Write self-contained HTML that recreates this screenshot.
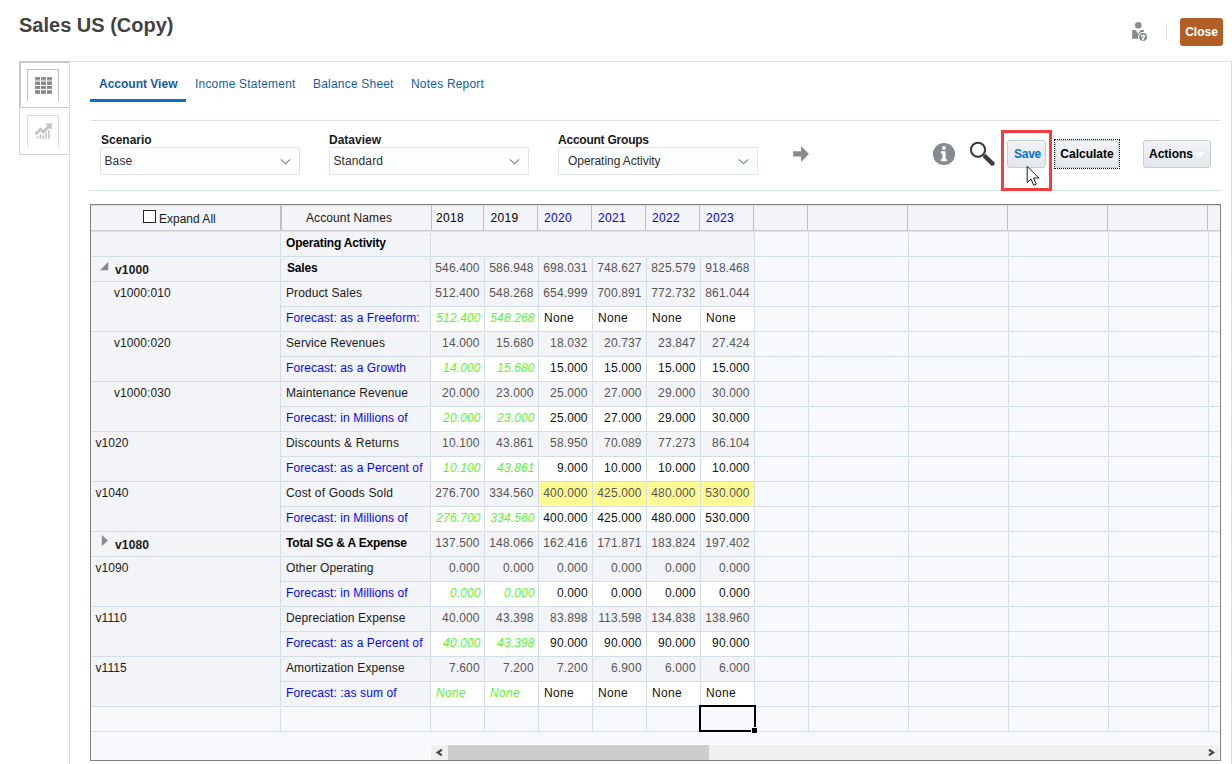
<!DOCTYPE html>
<html lang="en">
<head>
<meta charset="utf-8">
<title>Sales US (Copy)</title>
<style>
html,body{margin:0;padding:0;background:#fff;}
body{width:1232px;height:764px;position:relative;overflow:hidden;font-family:"Liberation Sans",Arial,sans-serif;font-size:12px;color:#1a1a1a;}
#root div,#root svg,#root span.a{position:absolute;}
#root .t{white-space:nowrap;line-height:24px;height:24px;font-size:12px;color:#1a1a1a;}
#root .hatch{background:repeating-linear-gradient(135deg,#fff888 0,#fff888 1.3px,#fffdf0 2.1px,#fffdf0 2.4px,#fff888 2.8284px);}
#root .btn{box-sizing:border-box;border:1px solid #c4ced7;border-radius:3px;background:linear-gradient(#f1f3f5,#e3e7eb);font-weight:bold;font-size:12px;line-height:26px;text-align:center;white-space:nowrap;}
#root .sel{box-sizing:border-box;border:1px solid #dfe4e7;background:#fcfdfe;border-radius:1px;}
</style>
</head>
<body>
<div id="root">
<!-- title -->
<div class="t" style="left:19px;top:10px;font-size:20px;font-weight:bold;line-height:30px;height:30px;color:#424242;">Sales US (Copy)</div>

<!-- person help icon -->
<svg style="left:1130px;top:20px;will-change:transform" width="20" height="23" viewBox="0 0 20 23">
  <circle cx="8.3" cy="5.3" r="3.25" fill="#868b90"/>
  <path d="M2.1 18.8V10.7Q2.1 9.9 2.9 9.9H5.6L8.4 13.7L10.4 9.9H13.1Q13.9 9.9 13.9 10.7V18.8Z" fill="#868b90"/>
  <circle cx="13.1" cy="17" r="5" fill="#fff"/>
  <circle cx="13.1" cy="17" r="3.9" fill="#868b90"/>
  <text x="13.1" y="19.9" font-size="8" font-weight="bold" text-anchor="middle" fill="#fff" stroke="#fff" stroke-width="0.35" font-family="Liberation Sans, Arial, sans-serif">?</text>
</svg>
<div style="left:1166px;top:23px;width:1px;height:17px;background:#d6dfe6;"></div>
<div style="left:1180px;top:18px;width:43px;height:28px;background:#b15f25;border-radius:3px;color:#fff;font-weight:bold;font-size:12px;line-height:28px;text-align:center;">Close</div>

<!-- side tabs -->
<div style="left:19px;top:61px;width:51px;height:94px;box-sizing:border-box;border:1px solid #cfd2d4;background:#fff;"></div>
<div style="left:19px;top:61px;width:51px;height:47px;box-sizing:border-box;border-top:2px solid #c9c9c9;border-left:2px solid #c9c9c9;border-bottom:1px solid #c9c9c9;"></div>
<div style="left:27px;top:69px;width:32px;height:32px;box-sizing:border-box;border:1px solid #bfc3c6;border-bottom:none;"></div>
<svg style="left:35px;top:77px" width="18" height="18" viewBox="0 0 18 18">
  <g fill="#c6c8ca"><rect x="0" y="2.8" width="5" height="2.2"/><rect x="6" y="2.8" width="5" height="2.2"/><rect x="12" y="2.8" width="5" height="2.2"/></g>
  <g fill="#85888b"><rect x="0" y="0.1" width="5" height="2.7"/><rect x="6" y="0.1" width="5" height="2.7"/><rect x="12" y="0.1" width="5" height="2.7"/><rect x="0" y="5" width="5" height="2.9"/><rect x="6" y="5" width="5" height="2.9"/><rect x="12" y="5" width="5" height="2.9"/><rect x="0" y="9" width="5" height="2.9"/><rect x="6" y="9" width="5" height="2.9"/><rect x="12" y="9" width="5" height="2.9"/><rect x="0" y="13.2" width="5" height="3.6"/><rect x="6" y="13.2" width="5" height="3.6"/><rect x="12" y="13.2" width="5" height="3.6"/></g>
</svg>
<div style="left:27px;top:115px;width:32px;height:32px;box-sizing:border-box;border:1px solid #dcdfe1;border-bottom:none;"></div>
<svg style="left:34px;top:122px" width="19" height="18" viewBox="0 0 19 18">
  <g fill="#c3c5c7">
  <path d="M0.3 11.5L6.5 5.2L9.3 8L13.3 4L11 1.7L18 1.1L17.5 8.2L15.3 6L9.3 12L6.5 9.2L2.3 13.5Z"/>
  <rect x="2.8" y="14.4" width="1.5" height="2.4"/><rect x="5.6" y="12.2" width="1.6" height="4.6"/><rect x="8.3" y="13.2" width="1.6" height="3.6"/><rect x="11.1" y="10.8" width="1.6" height="6"/><rect x="14" y="8" width="1.7" height="8.8"/>
  </g>
</svg>

<!-- main panel -->
<div style="left:69px;top:61px;width:1163px;height:720px;box-sizing:border-box;border:1px solid #d6dfe6;background:#fff;"></div>

<!-- tabs -->
<div class="t" style="left:99px;top:72px;font-weight:bold;color:#145c9e;">Account View</div>
<div class="t" style="left:195px;top:72px;color:#145c9e;letter-spacing:0.2px;">Income Statement</div>
<div class="t" style="left:313px;top:72px;color:#145c9e;letter-spacing:0.2px;">Balance Sheet</div>
<div class="t" style="left:411px;top:72px;color:#145c9e;letter-spacing:0.2px;">Notes Report</div>
<div style="left:90px;top:99px;width:96px;height:3px;background:#0572ce;"></div>
<div style="left:90px;top:120px;width:1131px;height:1px;background:#d9e0e6;"></div>

<!-- filters -->
<div class="t" style="left:101px;top:128px;font-weight:bold;">Scenario</div>
<div class="sel" style="left:100px;top:147px;width:200px;height:28px;"></div>
<div class="t" style="left:104.5px;top:149px;color:#2e2e2e;letter-spacing:0.1px;">Base</div>
<svg style="left:279px;top:157px" width="13" height="9" viewBox="0 0 13 9"><path d="M1.8 2.3L6.5 6.8L11.2 2.3" fill="none" stroke="#7a7f85" stroke-width="1.05"/></svg>

<div class="t" style="left:329px;top:128px;font-weight:bold;">Dataview</div>
<div class="sel" style="left:329px;top:147px;width:200px;height:28px;"></div>
<div class="t" style="left:333.5px;top:149px;color:#2e2e2e;letter-spacing:0.1px;">Standard</div>
<svg style="left:508px;top:157px" width="13" height="9" viewBox="0 0 13 9"><path d="M1.8 2.3L6.5 6.8L11.2 2.3" fill="none" stroke="#7a7f85" stroke-width="1.05"/></svg>

<div class="t" style="left:558px;top:128px;font-weight:bold;letter-spacing:-0.23px;">Account Groups</div>
<div class="sel" style="left:558px;top:147px;width:200px;height:28px;"></div>
<div class="t" style="left:568px;top:149px;color:#2e2e2e;letter-spacing:-0.05px;">Operating Activity</div>
<svg style="left:737px;top:157px" width="13" height="9" viewBox="0 0 13 9"><path d="M1.8 2.3L6.5 6.8L11.2 2.3" fill="none" stroke="#7a7f85" stroke-width="1.05"/></svg>

<!-- arrow -->
<svg style="left:793px;top:146px" width="17" height="17" viewBox="0 0 17 17"><path d="M0.2 5.2H8.1V0L15.9 7.95L8.1 16V10.6H0.2Z" fill="#868b8f"/></svg>

<!-- info -->
<svg style="left:932px;top:142px" width="24" height="24" viewBox="0 0 24 24">
  <circle cx="12" cy="12" r="11.1" fill="#868b8f"/>
  <circle cx="11.9" cy="6" r="1.9" fill="#fff"/>
  <path d="M8.8 9.3H13.6V17.2H15.2V19.3H8.8V17.2H10.4V11.4H8.8Z" fill="#fff"/>
</svg>
<!-- search -->
<svg style="left:968px;top:140px" width="28" height="28" viewBox="0 0 28 28">
  <circle cx="10" cy="9.85" r="7.05" fill="none" stroke="#3d3d3d" stroke-width="2.1"/>
  <path d="M16 15.4L25 24.1" stroke="#3d3d3d" stroke-width="4.3" stroke-linecap="butt"/><circle cx="24.6" cy="23.7" r="2.1" fill="#3d3d3d"/>
</svg>

<!-- save highlight + buttons -->
<div style="left:1001px;top:130px;width:51px;height:61px;box-sizing:border-box;border:3px solid #f83d40;z-index:2;"></div>
<div class="btn" style="left:1007px;top:140px;width:39px;height:28px;color:#0572ce;letter-spacing:-0.25px;padding-left:2px;">Save</div>
<div style="left:1054px;top:139px;width:66px;height:30px;box-sizing:border-box;border:1px dotted #000;"></div>
<div class="btn" style="left:1055px;top:140px;width:64px;height:28px;color:#000;line-height:26px;">Calculate</div>
<div class="btn" style="left:1143px;top:140px;width:68px;height:28px;color:#000;text-align:left;padding-left:5px;">Actions</div>
<svg style="left:1195px;top:152px" width="11" height="6" viewBox="0 0 11 6"><path d="M0 0H10L5 5.6Z" fill="#fdfdfe"/></svg>

<div style="left:90px;top:190px;width:1131px;height:1px;background:#d9e0e6;"></div>

<!-- table -->
<div style="left:90px;top:204px;width:1131px;height:557px;background:#f8f9fc;border:1px solid #808080;box-sizing:border-box;"></div>
<div style="left:91px;top:205px;width:1129px;height:25px;background:#f3f4f8;"></div>
<div style="left:91px;top:230px;width:1129px;height:1px;background:#cbcbcb;"></div>
<div style="left:91px;top:205px;width:1129px;height:1px;background:#dcdcdd;"></div>
<div style="left:91px;top:231px;width:1129px;height:1px;background:#dce4eb;"></div>
<div style="left:280px;top:206px;width:2px;height:24px;background:#c0c0c0;"></div>
<div style="left:431px;top:206px;width:1px;height:24px;background:#bdbdbd;"></div>
<div style="left:483px;top:206px;width:1px;height:24px;background:#bdbdbd;"></div>
<div style="left:537px;top:206px;width:1px;height:24px;background:#bdbdbd;"></div>
<div style="left:591px;top:206px;width:1px;height:24px;background:#bdbdbd;"></div>
<div style="left:645px;top:206px;width:1px;height:24px;background:#bdbdbd;"></div>
<div style="left:699px;top:206px;width:1px;height:24px;background:#bdbdbd;"></div>
<div style="left:753px;top:206px;width:1px;height:24px;background:#bdbdbd;"></div>
<div style="left:807px;top:206px;width:1px;height:24px;background:#bdbdbd;"></div>
<div style="left:907px;top:206px;width:1px;height:24px;background:#bdbdbd;"></div>
<div style="left:1007px;top:206px;width:1px;height:24px;background:#bdbdbd;"></div>
<div style="left:1107px;top:206px;width:1px;height:24px;background:#bdbdbd;"></div>
<div style="left:1207px;top:206px;width:1px;height:24px;background:#bdbdbd;"></div>
<div style="left:91px;top:232px;width:339px;height:24px;background:#f3f4f7;"></div>
<div style="left:431px;top:232px;width:323px;height:24px;background:#f3f4f7;"></div>
<div style="left:91px;top:257px;width:339px;height:24px;background:#f3f4f7;"></div>
<div style="left:431px;top:257px;width:323px;height:24px;background:#f3f4f7;"></div>
<div style="left:91px;top:282px;width:339px;height:24px;background:#f3f4f7;"></div>
<div style="left:431px;top:282px;width:323px;height:24px;background:#f3f4f7;"></div>
<div style="left:91px;top:307px;width:339px;height:24px;background:#f3f4f7;"></div>
<div style="left:431px;top:307px;width:323px;height:24px;background:#fff;"></div>
<div style="left:91px;top:332px;width:339px;height:24px;background:#f3f4f7;"></div>
<div style="left:431px;top:332px;width:323px;height:24px;background:#f3f4f7;"></div>
<div style="left:91px;top:357px;width:339px;height:24px;background:#f3f4f7;"></div>
<div style="left:431px;top:357px;width:323px;height:24px;background:#fff;"></div>
<div style="left:91px;top:382px;width:339px;height:24px;background:#f3f4f7;"></div>
<div style="left:431px;top:382px;width:323px;height:24px;background:#f3f4f7;"></div>
<div style="left:91px;top:407px;width:339px;height:24px;background:#f3f4f7;"></div>
<div style="left:431px;top:407px;width:323px;height:24px;background:#fff;"></div>
<div style="left:91px;top:432px;width:339px;height:24px;background:#f3f4f7;"></div>
<div style="left:431px;top:432px;width:323px;height:24px;background:#f3f4f7;"></div>
<div style="left:91px;top:457px;width:339px;height:24px;background:#f3f4f7;"></div>
<div style="left:431px;top:457px;width:323px;height:24px;background:#fff;"></div>
<div style="left:91px;top:482px;width:339px;height:24px;background:#f3f4f7;"></div>
<div style="left:431px;top:482px;width:323px;height:24px;background:#f3f4f7;"></div>
<div class="hatch" style="left:539px;top:482px;width:53px;height:24px;"></div>
<div class="hatch" style="left:593px;top:482px;width:53px;height:24px;"></div>
<div class="hatch" style="left:647px;top:482px;width:53px;height:24px;"></div>
<div class="hatch" style="left:701px;top:482px;width:53px;height:24px;"></div>
<div style="left:91px;top:507px;width:339px;height:24px;background:#f3f4f7;"></div>
<div style="left:431px;top:507px;width:323px;height:24px;background:#fff;"></div>
<div style="left:91px;top:532px;width:339px;height:24px;background:#f3f4f7;"></div>
<div style="left:431px;top:532px;width:323px;height:24px;background:#f3f4f7;"></div>
<div style="left:91px;top:557px;width:339px;height:24px;background:#f3f4f7;"></div>
<div style="left:431px;top:557px;width:323px;height:24px;background:#f3f4f7;"></div>
<div style="left:91px;top:582px;width:339px;height:24px;background:#f3f4f7;"></div>
<div style="left:431px;top:582px;width:323px;height:24px;background:#fff;"></div>
<div style="left:91px;top:607px;width:339px;height:24px;background:#f3f4f7;"></div>
<div style="left:431px;top:607px;width:323px;height:24px;background:#f3f4f7;"></div>
<div style="left:91px;top:632px;width:339px;height:24px;background:#f3f4f7;"></div>
<div style="left:431px;top:632px;width:323px;height:24px;background:#fff;"></div>
<div style="left:91px;top:657px;width:339px;height:24px;background:#f3f4f7;"></div>
<div style="left:431px;top:657px;width:323px;height:24px;background:#f3f4f7;"></div>
<div style="left:91px;top:682px;width:339px;height:24px;background:#f3f4f7;"></div>
<div style="left:431px;top:682px;width:323px;height:24px;background:#fff;"></div>
<div style="left:91px;top:256px;width:1128px;height:1px;background:#d3dde5;"></div>
<div style="left:91px;top:281px;width:1128px;height:1px;background:#d3dde5;"></div>
<div style="left:91px;top:306px;width:190px;height:1px;background:#f3f4f7;"></div>
<div style="left:281px;top:306px;width:938px;height:1px;background:#d3dde5;"></div>
<div style="left:91px;top:331px;width:1128px;height:1px;background:#d3dde5;"></div>
<div style="left:91px;top:356px;width:190px;height:1px;background:#f3f4f7;"></div>
<div style="left:281px;top:356px;width:938px;height:1px;background:#d3dde5;"></div>
<div style="left:91px;top:381px;width:1128px;height:1px;background:#d3dde5;"></div>
<div style="left:91px;top:406px;width:190px;height:1px;background:#f3f4f7;"></div>
<div style="left:281px;top:406px;width:938px;height:1px;background:#d3dde5;"></div>
<div style="left:91px;top:431px;width:1128px;height:1px;background:#d3dde5;"></div>
<div style="left:91px;top:456px;width:190px;height:1px;background:#f3f4f7;"></div>
<div style="left:281px;top:456px;width:938px;height:1px;background:#d3dde5;"></div>
<div style="left:91px;top:481px;width:1128px;height:1px;background:#d3dde5;"></div>
<div style="left:91px;top:506px;width:190px;height:1px;background:#f3f4f7;"></div>
<div style="left:281px;top:506px;width:938px;height:1px;background:#d3dde5;"></div>
<div style="left:91px;top:531px;width:1128px;height:1px;background:#d3dde5;"></div>
<div style="left:91px;top:556px;width:1128px;height:1px;background:#d3dde5;"></div>
<div style="left:91px;top:581px;width:190px;height:1px;background:#f3f4f7;"></div>
<div style="left:281px;top:581px;width:938px;height:1px;background:#d3dde5;"></div>
<div style="left:91px;top:606px;width:1128px;height:1px;background:#d3dde5;"></div>
<div style="left:91px;top:631px;width:190px;height:1px;background:#f3f4f7;"></div>
<div style="left:281px;top:631px;width:938px;height:1px;background:#d3dde5;"></div>
<div style="left:91px;top:656px;width:1128px;height:1px;background:#d3dde5;"></div>
<div style="left:91px;top:681px;width:190px;height:1px;background:#f3f4f7;"></div>
<div style="left:281px;top:681px;width:938px;height:1px;background:#d3dde5;"></div>
<div style="left:91px;top:706px;width:1128px;height:1px;background:#d3dde5;"></div>
<div style="left:91px;top:731px;width:1128px;height:1px;background:#d3dde5;"></div>
<div style="left:280px;top:233px;width:1px;height:23px;background:#d3dde5;"></div>
<div style="left:430px;top:233px;width:1px;height:23px;background:#d3dde5;"></div>
<div style="left:754px;top:233px;width:1px;height:23px;background:#d3dde5;"></div>
<div style="left:808px;top:233px;width:1px;height:23px;background:#d3dde5;"></div>
<div style="left:908px;top:233px;width:1px;height:23px;background:#d3dde5;"></div>
<div style="left:1008px;top:233px;width:1px;height:23px;background:#d3dde5;"></div>
<div style="left:1108px;top:233px;width:1px;height:23px;background:#d3dde5;"></div>
<div style="left:1208px;top:233px;width:1px;height:23px;background:#d3dde5;"></div>
<div style="left:280px;top:258px;width:1px;height:23px;background:#d3dde5;"></div>
<div style="left:430px;top:258px;width:1px;height:23px;background:#d3dde5;"></div>
<div style="left:484px;top:258px;width:1px;height:23px;background:#d3dde5;"></div>
<div style="left:538px;top:258px;width:1px;height:23px;background:#d3dde5;"></div>
<div style="left:592px;top:258px;width:1px;height:23px;background:#d3dde5;"></div>
<div style="left:646px;top:258px;width:1px;height:23px;background:#d3dde5;"></div>
<div style="left:700px;top:258px;width:1px;height:23px;background:#d3dde5;"></div>
<div style="left:754px;top:258px;width:1px;height:23px;background:#d3dde5;"></div>
<div style="left:808px;top:258px;width:1px;height:23px;background:#d3dde5;"></div>
<div style="left:908px;top:258px;width:1px;height:23px;background:#d3dde5;"></div>
<div style="left:1008px;top:258px;width:1px;height:23px;background:#d3dde5;"></div>
<div style="left:1108px;top:258px;width:1px;height:23px;background:#d3dde5;"></div>
<div style="left:1208px;top:258px;width:1px;height:23px;background:#d3dde5;"></div>
<div style="left:280px;top:283px;width:1px;height:23px;background:#d3dde5;"></div>
<div style="left:430px;top:283px;width:1px;height:23px;background:#d3dde5;"></div>
<div style="left:484px;top:283px;width:1px;height:23px;background:#d3dde5;"></div>
<div style="left:538px;top:283px;width:1px;height:23px;background:#d3dde5;"></div>
<div style="left:592px;top:283px;width:1px;height:23px;background:#d3dde5;"></div>
<div style="left:646px;top:283px;width:1px;height:23px;background:#d3dde5;"></div>
<div style="left:700px;top:283px;width:1px;height:23px;background:#d3dde5;"></div>
<div style="left:754px;top:283px;width:1px;height:23px;background:#d3dde5;"></div>
<div style="left:808px;top:283px;width:1px;height:23px;background:#d3dde5;"></div>
<div style="left:908px;top:283px;width:1px;height:23px;background:#d3dde5;"></div>
<div style="left:1008px;top:283px;width:1px;height:23px;background:#d3dde5;"></div>
<div style="left:1108px;top:283px;width:1px;height:23px;background:#d3dde5;"></div>
<div style="left:1208px;top:283px;width:1px;height:23px;background:#d3dde5;"></div>
<div style="left:280px;top:306px;width:1px;height:25px;background:#d3dde5;"></div>
<div style="left:430px;top:308px;width:1px;height:23px;background:#d3dde5;"></div>
<div style="left:484px;top:308px;width:1px;height:23px;background:#d3dde5;"></div>
<div style="left:538px;top:308px;width:1px;height:23px;background:#d3dde5;"></div>
<div style="left:592px;top:308px;width:1px;height:23px;background:#d3dde5;"></div>
<div style="left:646px;top:308px;width:1px;height:23px;background:#d3dde5;"></div>
<div style="left:700px;top:308px;width:1px;height:23px;background:#d3dde5;"></div>
<div style="left:754px;top:308px;width:1px;height:23px;background:#d3dde5;"></div>
<div style="left:808px;top:308px;width:1px;height:23px;background:#d3dde5;"></div>
<div style="left:908px;top:308px;width:1px;height:23px;background:#d3dde5;"></div>
<div style="left:1008px;top:308px;width:1px;height:23px;background:#d3dde5;"></div>
<div style="left:1108px;top:308px;width:1px;height:23px;background:#d3dde5;"></div>
<div style="left:1208px;top:308px;width:1px;height:23px;background:#d3dde5;"></div>
<div style="left:280px;top:333px;width:1px;height:23px;background:#d3dde5;"></div>
<div style="left:430px;top:333px;width:1px;height:23px;background:#d3dde5;"></div>
<div style="left:484px;top:333px;width:1px;height:23px;background:#d3dde5;"></div>
<div style="left:538px;top:333px;width:1px;height:23px;background:#d3dde5;"></div>
<div style="left:592px;top:333px;width:1px;height:23px;background:#d3dde5;"></div>
<div style="left:646px;top:333px;width:1px;height:23px;background:#d3dde5;"></div>
<div style="left:700px;top:333px;width:1px;height:23px;background:#d3dde5;"></div>
<div style="left:754px;top:333px;width:1px;height:23px;background:#d3dde5;"></div>
<div style="left:808px;top:333px;width:1px;height:23px;background:#d3dde5;"></div>
<div style="left:908px;top:333px;width:1px;height:23px;background:#d3dde5;"></div>
<div style="left:1008px;top:333px;width:1px;height:23px;background:#d3dde5;"></div>
<div style="left:1108px;top:333px;width:1px;height:23px;background:#d3dde5;"></div>
<div style="left:1208px;top:333px;width:1px;height:23px;background:#d3dde5;"></div>
<div style="left:280px;top:356px;width:1px;height:25px;background:#d3dde5;"></div>
<div style="left:430px;top:358px;width:1px;height:23px;background:#d3dde5;"></div>
<div style="left:484px;top:358px;width:1px;height:23px;background:#d3dde5;"></div>
<div style="left:538px;top:358px;width:1px;height:23px;background:#d3dde5;"></div>
<div style="left:592px;top:358px;width:1px;height:23px;background:#d3dde5;"></div>
<div style="left:646px;top:358px;width:1px;height:23px;background:#d3dde5;"></div>
<div style="left:700px;top:358px;width:1px;height:23px;background:#d3dde5;"></div>
<div style="left:754px;top:358px;width:1px;height:23px;background:#d3dde5;"></div>
<div style="left:808px;top:358px;width:1px;height:23px;background:#d3dde5;"></div>
<div style="left:908px;top:358px;width:1px;height:23px;background:#d3dde5;"></div>
<div style="left:1008px;top:358px;width:1px;height:23px;background:#d3dde5;"></div>
<div style="left:1108px;top:358px;width:1px;height:23px;background:#d3dde5;"></div>
<div style="left:1208px;top:358px;width:1px;height:23px;background:#d3dde5;"></div>
<div style="left:280px;top:383px;width:1px;height:23px;background:#d3dde5;"></div>
<div style="left:430px;top:383px;width:1px;height:23px;background:#d3dde5;"></div>
<div style="left:484px;top:383px;width:1px;height:23px;background:#d3dde5;"></div>
<div style="left:538px;top:383px;width:1px;height:23px;background:#d3dde5;"></div>
<div style="left:592px;top:383px;width:1px;height:23px;background:#d3dde5;"></div>
<div style="left:646px;top:383px;width:1px;height:23px;background:#d3dde5;"></div>
<div style="left:700px;top:383px;width:1px;height:23px;background:#d3dde5;"></div>
<div style="left:754px;top:383px;width:1px;height:23px;background:#d3dde5;"></div>
<div style="left:808px;top:383px;width:1px;height:23px;background:#d3dde5;"></div>
<div style="left:908px;top:383px;width:1px;height:23px;background:#d3dde5;"></div>
<div style="left:1008px;top:383px;width:1px;height:23px;background:#d3dde5;"></div>
<div style="left:1108px;top:383px;width:1px;height:23px;background:#d3dde5;"></div>
<div style="left:1208px;top:383px;width:1px;height:23px;background:#d3dde5;"></div>
<div style="left:280px;top:406px;width:1px;height:25px;background:#d3dde5;"></div>
<div style="left:430px;top:408px;width:1px;height:23px;background:#d3dde5;"></div>
<div style="left:484px;top:408px;width:1px;height:23px;background:#d3dde5;"></div>
<div style="left:538px;top:408px;width:1px;height:23px;background:#d3dde5;"></div>
<div style="left:592px;top:408px;width:1px;height:23px;background:#d3dde5;"></div>
<div style="left:646px;top:408px;width:1px;height:23px;background:#d3dde5;"></div>
<div style="left:700px;top:408px;width:1px;height:23px;background:#d3dde5;"></div>
<div style="left:754px;top:408px;width:1px;height:23px;background:#d3dde5;"></div>
<div style="left:808px;top:408px;width:1px;height:23px;background:#d3dde5;"></div>
<div style="left:908px;top:408px;width:1px;height:23px;background:#d3dde5;"></div>
<div style="left:1008px;top:408px;width:1px;height:23px;background:#d3dde5;"></div>
<div style="left:1108px;top:408px;width:1px;height:23px;background:#d3dde5;"></div>
<div style="left:1208px;top:408px;width:1px;height:23px;background:#d3dde5;"></div>
<div style="left:280px;top:433px;width:1px;height:23px;background:#d3dde5;"></div>
<div style="left:430px;top:433px;width:1px;height:23px;background:#d3dde5;"></div>
<div style="left:484px;top:433px;width:1px;height:23px;background:#d3dde5;"></div>
<div style="left:538px;top:433px;width:1px;height:23px;background:#d3dde5;"></div>
<div style="left:592px;top:433px;width:1px;height:23px;background:#d3dde5;"></div>
<div style="left:646px;top:433px;width:1px;height:23px;background:#d3dde5;"></div>
<div style="left:700px;top:433px;width:1px;height:23px;background:#d3dde5;"></div>
<div style="left:754px;top:433px;width:1px;height:23px;background:#d3dde5;"></div>
<div style="left:808px;top:433px;width:1px;height:23px;background:#d3dde5;"></div>
<div style="left:908px;top:433px;width:1px;height:23px;background:#d3dde5;"></div>
<div style="left:1008px;top:433px;width:1px;height:23px;background:#d3dde5;"></div>
<div style="left:1108px;top:433px;width:1px;height:23px;background:#d3dde5;"></div>
<div style="left:1208px;top:433px;width:1px;height:23px;background:#d3dde5;"></div>
<div style="left:280px;top:456px;width:1px;height:25px;background:#d3dde5;"></div>
<div style="left:430px;top:458px;width:1px;height:23px;background:#d3dde5;"></div>
<div style="left:484px;top:458px;width:1px;height:23px;background:#d3dde5;"></div>
<div style="left:538px;top:458px;width:1px;height:23px;background:#d3dde5;"></div>
<div style="left:592px;top:458px;width:1px;height:23px;background:#d3dde5;"></div>
<div style="left:646px;top:458px;width:1px;height:23px;background:#d3dde5;"></div>
<div style="left:700px;top:458px;width:1px;height:23px;background:#d3dde5;"></div>
<div style="left:754px;top:458px;width:1px;height:23px;background:#d3dde5;"></div>
<div style="left:808px;top:458px;width:1px;height:23px;background:#d3dde5;"></div>
<div style="left:908px;top:458px;width:1px;height:23px;background:#d3dde5;"></div>
<div style="left:1008px;top:458px;width:1px;height:23px;background:#d3dde5;"></div>
<div style="left:1108px;top:458px;width:1px;height:23px;background:#d3dde5;"></div>
<div style="left:1208px;top:458px;width:1px;height:23px;background:#d3dde5;"></div>
<div style="left:280px;top:483px;width:1px;height:23px;background:#d3dde5;"></div>
<div style="left:430px;top:483px;width:1px;height:23px;background:#d3dde5;"></div>
<div style="left:484px;top:483px;width:1px;height:23px;background:#d3dde5;"></div>
<div style="left:538px;top:483px;width:1px;height:23px;background:#d3dde5;"></div>
<div style="left:592px;top:483px;width:1px;height:23px;background:#d3dde5;"></div>
<div style="left:646px;top:483px;width:1px;height:23px;background:#d3dde5;"></div>
<div style="left:700px;top:483px;width:1px;height:23px;background:#d3dde5;"></div>
<div style="left:754px;top:483px;width:1px;height:23px;background:#d3dde5;"></div>
<div style="left:808px;top:483px;width:1px;height:23px;background:#d3dde5;"></div>
<div style="left:908px;top:483px;width:1px;height:23px;background:#d3dde5;"></div>
<div style="left:1008px;top:483px;width:1px;height:23px;background:#d3dde5;"></div>
<div style="left:1108px;top:483px;width:1px;height:23px;background:#d3dde5;"></div>
<div style="left:1208px;top:483px;width:1px;height:23px;background:#d3dde5;"></div>
<div style="left:280px;top:506px;width:1px;height:25px;background:#d3dde5;"></div>
<div style="left:430px;top:508px;width:1px;height:23px;background:#d3dde5;"></div>
<div style="left:484px;top:508px;width:1px;height:23px;background:#d3dde5;"></div>
<div style="left:538px;top:508px;width:1px;height:23px;background:#d3dde5;"></div>
<div style="left:592px;top:508px;width:1px;height:23px;background:#d3dde5;"></div>
<div style="left:646px;top:508px;width:1px;height:23px;background:#d3dde5;"></div>
<div style="left:700px;top:508px;width:1px;height:23px;background:#d3dde5;"></div>
<div style="left:754px;top:508px;width:1px;height:23px;background:#d3dde5;"></div>
<div style="left:808px;top:508px;width:1px;height:23px;background:#d3dde5;"></div>
<div style="left:908px;top:508px;width:1px;height:23px;background:#d3dde5;"></div>
<div style="left:1008px;top:508px;width:1px;height:23px;background:#d3dde5;"></div>
<div style="left:1108px;top:508px;width:1px;height:23px;background:#d3dde5;"></div>
<div style="left:1208px;top:508px;width:1px;height:23px;background:#d3dde5;"></div>
<div style="left:280px;top:533px;width:1px;height:23px;background:#d3dde5;"></div>
<div style="left:430px;top:533px;width:1px;height:23px;background:#d3dde5;"></div>
<div style="left:484px;top:533px;width:1px;height:23px;background:#d3dde5;"></div>
<div style="left:538px;top:533px;width:1px;height:23px;background:#d3dde5;"></div>
<div style="left:592px;top:533px;width:1px;height:23px;background:#d3dde5;"></div>
<div style="left:646px;top:533px;width:1px;height:23px;background:#d3dde5;"></div>
<div style="left:700px;top:533px;width:1px;height:23px;background:#d3dde5;"></div>
<div style="left:754px;top:533px;width:1px;height:23px;background:#d3dde5;"></div>
<div style="left:808px;top:533px;width:1px;height:23px;background:#d3dde5;"></div>
<div style="left:908px;top:533px;width:1px;height:23px;background:#d3dde5;"></div>
<div style="left:1008px;top:533px;width:1px;height:23px;background:#d3dde5;"></div>
<div style="left:1108px;top:533px;width:1px;height:23px;background:#d3dde5;"></div>
<div style="left:1208px;top:533px;width:1px;height:23px;background:#d3dde5;"></div>
<div style="left:280px;top:558px;width:1px;height:23px;background:#d3dde5;"></div>
<div style="left:430px;top:558px;width:1px;height:23px;background:#d3dde5;"></div>
<div style="left:484px;top:558px;width:1px;height:23px;background:#d3dde5;"></div>
<div style="left:538px;top:558px;width:1px;height:23px;background:#d3dde5;"></div>
<div style="left:592px;top:558px;width:1px;height:23px;background:#d3dde5;"></div>
<div style="left:646px;top:558px;width:1px;height:23px;background:#d3dde5;"></div>
<div style="left:700px;top:558px;width:1px;height:23px;background:#d3dde5;"></div>
<div style="left:754px;top:558px;width:1px;height:23px;background:#d3dde5;"></div>
<div style="left:808px;top:558px;width:1px;height:23px;background:#d3dde5;"></div>
<div style="left:908px;top:558px;width:1px;height:23px;background:#d3dde5;"></div>
<div style="left:1008px;top:558px;width:1px;height:23px;background:#d3dde5;"></div>
<div style="left:1108px;top:558px;width:1px;height:23px;background:#d3dde5;"></div>
<div style="left:1208px;top:558px;width:1px;height:23px;background:#d3dde5;"></div>
<div style="left:280px;top:581px;width:1px;height:25px;background:#d3dde5;"></div>
<div style="left:430px;top:583px;width:1px;height:23px;background:#d3dde5;"></div>
<div style="left:484px;top:583px;width:1px;height:23px;background:#d3dde5;"></div>
<div style="left:538px;top:583px;width:1px;height:23px;background:#d3dde5;"></div>
<div style="left:592px;top:583px;width:1px;height:23px;background:#d3dde5;"></div>
<div style="left:646px;top:583px;width:1px;height:23px;background:#d3dde5;"></div>
<div style="left:700px;top:583px;width:1px;height:23px;background:#d3dde5;"></div>
<div style="left:754px;top:583px;width:1px;height:23px;background:#d3dde5;"></div>
<div style="left:808px;top:583px;width:1px;height:23px;background:#d3dde5;"></div>
<div style="left:908px;top:583px;width:1px;height:23px;background:#d3dde5;"></div>
<div style="left:1008px;top:583px;width:1px;height:23px;background:#d3dde5;"></div>
<div style="left:1108px;top:583px;width:1px;height:23px;background:#d3dde5;"></div>
<div style="left:1208px;top:583px;width:1px;height:23px;background:#d3dde5;"></div>
<div style="left:280px;top:608px;width:1px;height:23px;background:#d3dde5;"></div>
<div style="left:430px;top:608px;width:1px;height:23px;background:#d3dde5;"></div>
<div style="left:484px;top:608px;width:1px;height:23px;background:#d3dde5;"></div>
<div style="left:538px;top:608px;width:1px;height:23px;background:#d3dde5;"></div>
<div style="left:592px;top:608px;width:1px;height:23px;background:#d3dde5;"></div>
<div style="left:646px;top:608px;width:1px;height:23px;background:#d3dde5;"></div>
<div style="left:700px;top:608px;width:1px;height:23px;background:#d3dde5;"></div>
<div style="left:754px;top:608px;width:1px;height:23px;background:#d3dde5;"></div>
<div style="left:808px;top:608px;width:1px;height:23px;background:#d3dde5;"></div>
<div style="left:908px;top:608px;width:1px;height:23px;background:#d3dde5;"></div>
<div style="left:1008px;top:608px;width:1px;height:23px;background:#d3dde5;"></div>
<div style="left:1108px;top:608px;width:1px;height:23px;background:#d3dde5;"></div>
<div style="left:1208px;top:608px;width:1px;height:23px;background:#d3dde5;"></div>
<div style="left:280px;top:631px;width:1px;height:25px;background:#d3dde5;"></div>
<div style="left:430px;top:633px;width:1px;height:23px;background:#d3dde5;"></div>
<div style="left:484px;top:633px;width:1px;height:23px;background:#d3dde5;"></div>
<div style="left:538px;top:633px;width:1px;height:23px;background:#d3dde5;"></div>
<div style="left:592px;top:633px;width:1px;height:23px;background:#d3dde5;"></div>
<div style="left:646px;top:633px;width:1px;height:23px;background:#d3dde5;"></div>
<div style="left:700px;top:633px;width:1px;height:23px;background:#d3dde5;"></div>
<div style="left:754px;top:633px;width:1px;height:23px;background:#d3dde5;"></div>
<div style="left:808px;top:633px;width:1px;height:23px;background:#d3dde5;"></div>
<div style="left:908px;top:633px;width:1px;height:23px;background:#d3dde5;"></div>
<div style="left:1008px;top:633px;width:1px;height:23px;background:#d3dde5;"></div>
<div style="left:1108px;top:633px;width:1px;height:23px;background:#d3dde5;"></div>
<div style="left:1208px;top:633px;width:1px;height:23px;background:#d3dde5;"></div>
<div style="left:280px;top:658px;width:1px;height:23px;background:#d3dde5;"></div>
<div style="left:430px;top:658px;width:1px;height:23px;background:#d3dde5;"></div>
<div style="left:484px;top:658px;width:1px;height:23px;background:#d3dde5;"></div>
<div style="left:538px;top:658px;width:1px;height:23px;background:#d3dde5;"></div>
<div style="left:592px;top:658px;width:1px;height:23px;background:#d3dde5;"></div>
<div style="left:646px;top:658px;width:1px;height:23px;background:#d3dde5;"></div>
<div style="left:700px;top:658px;width:1px;height:23px;background:#d3dde5;"></div>
<div style="left:754px;top:658px;width:1px;height:23px;background:#d3dde5;"></div>
<div style="left:808px;top:658px;width:1px;height:23px;background:#d3dde5;"></div>
<div style="left:908px;top:658px;width:1px;height:23px;background:#d3dde5;"></div>
<div style="left:1008px;top:658px;width:1px;height:23px;background:#d3dde5;"></div>
<div style="left:1108px;top:658px;width:1px;height:23px;background:#d3dde5;"></div>
<div style="left:1208px;top:658px;width:1px;height:23px;background:#d3dde5;"></div>
<div style="left:280px;top:681px;width:1px;height:25px;background:#d3dde5;"></div>
<div style="left:430px;top:683px;width:1px;height:23px;background:#d3dde5;"></div>
<div style="left:484px;top:683px;width:1px;height:23px;background:#d3dde5;"></div>
<div style="left:538px;top:683px;width:1px;height:23px;background:#d3dde5;"></div>
<div style="left:592px;top:683px;width:1px;height:23px;background:#d3dde5;"></div>
<div style="left:646px;top:683px;width:1px;height:23px;background:#d3dde5;"></div>
<div style="left:700px;top:683px;width:1px;height:23px;background:#d3dde5;"></div>
<div style="left:754px;top:683px;width:1px;height:23px;background:#d3dde5;"></div>
<div style="left:808px;top:683px;width:1px;height:23px;background:#d3dde5;"></div>
<div style="left:908px;top:683px;width:1px;height:23px;background:#d3dde5;"></div>
<div style="left:1008px;top:683px;width:1px;height:23px;background:#d3dde5;"></div>
<div style="left:1108px;top:683px;width:1px;height:23px;background:#d3dde5;"></div>
<div style="left:1208px;top:683px;width:1px;height:23px;background:#d3dde5;"></div>
<div style="left:280px;top:708px;width:1px;height:23px;background:#d3dde5;"></div>
<div style="left:430px;top:708px;width:1px;height:23px;background:#d3dde5;"></div>
<div style="left:484px;top:708px;width:1px;height:23px;background:#d3dde5;"></div>
<div style="left:538px;top:708px;width:1px;height:23px;background:#d3dde5;"></div>
<div style="left:592px;top:708px;width:1px;height:23px;background:#d3dde5;"></div>
<div style="left:646px;top:708px;width:1px;height:23px;background:#d3dde5;"></div>
<div style="left:700px;top:708px;width:1px;height:23px;background:#d3dde5;"></div>
<div style="left:754px;top:708px;width:1px;height:23px;background:#d3dde5;"></div>
<div style="left:808px;top:708px;width:1px;height:23px;background:#d3dde5;"></div>
<div style="left:908px;top:708px;width:1px;height:23px;background:#d3dde5;"></div>
<div style="left:1008px;top:708px;width:1px;height:23px;background:#d3dde5;"></div>
<div style="left:1108px;top:708px;width:1px;height:23px;background:#d3dde5;"></div>
<div style="left:1208px;top:708px;width:1px;height:23px;background:#d3dde5;"></div>
<div style="left:143px;top:210px;width:13px;height:13px;border:1px solid #222;background:#fff;box-sizing:border-box;"></div>
<div class="t" style="left:159px;top:207px;">Expand All</div>
<div class="t" style="left:306px;top:206px;letter-spacing:0.1px;">Account Names</div>
<div class="t" style="left:436px;top:206px;color:#000;letter-spacing:0.3px;">2018</div>
<div class="t" style="left:490.5px;top:206px;color:#000;letter-spacing:0.3px;">2019</div>
<div class="t" style="left:544px;top:206px;color:#0000f0;letter-spacing:0.3px;">2020</div>
<div class="t" style="left:598px;top:206px;color:#0000f0;letter-spacing:0.3px;">2021</div>
<div class="t" style="left:652px;top:206px;color:#0000f0;letter-spacing:0.3px;">2022</div>
<div class="t" style="left:706px;top:206px;color:#0000f0;letter-spacing:0.3px;">2023</div>
<div class="t" style="left:286px;top:231px;font-weight:bold;color:#000;letter-spacing:-0.17px;">Operating Activity</div>
<div class="t" style="left:115px;top:258px;font-weight:bold;letter-spacing:0.15px;">v1000</div>
<svg style="left:100px;top:262px" width="9" height="9" viewBox="0 0 9 9"><path d="M8.2 0V8.2H0Z" fill="#878a8e"/></svg>
<div class="t" style="left:287px;top:256px;font-weight:bold;color:#000;letter-spacing:-0.17px;">Sales</div>
<div class="t" style="left:431px;top:256px;width:53px;color:#555;letter-spacing:0.15px;text-align:right;padding-right:4.3px;box-sizing:border-box;">546.400</div>
<div class="t" style="left:485px;top:256px;width:53px;color:#555;letter-spacing:0.15px;text-align:right;padding-right:4.3px;box-sizing:border-box;">586.948</div>
<div class="t" style="left:539px;top:256px;width:53px;color:#555;letter-spacing:0.15px;text-align:right;padding-right:4.3px;box-sizing:border-box;">698.031</div>
<div class="t" style="left:593px;top:256px;width:53px;color:#555;letter-spacing:0.15px;text-align:right;padding-right:4.3px;box-sizing:border-box;">748.627</div>
<div class="t" style="left:647px;top:256px;width:53px;color:#555;letter-spacing:0.15px;text-align:right;padding-right:4.3px;box-sizing:border-box;">825.579</div>
<div class="t" style="left:701px;top:256px;width:53px;color:#555;letter-spacing:0.15px;text-align:right;padding-right:4.3px;box-sizing:border-box;">918.468</div>
<div class="t" style="left:114px;top:281px;letter-spacing:0.08px;">v1000:010</div>
<div class="t" style="left:286px;top:281px;letter-spacing:0.1px;">Product Sales</div>
<div class="t" style="left:431px;top:281px;width:53px;color:#555;letter-spacing:0.15px;text-align:right;padding-right:4.3px;box-sizing:border-box;">512.400</div>
<div class="t" style="left:485px;top:281px;width:53px;color:#555;letter-spacing:0.15px;text-align:right;padding-right:4.3px;box-sizing:border-box;">548.268</div>
<div class="t" style="left:539px;top:281px;width:53px;color:#555;letter-spacing:0.15px;text-align:right;padding-right:4.3px;box-sizing:border-box;">654.999</div>
<div class="t" style="left:593px;top:281px;width:53px;color:#555;letter-spacing:0.15px;text-align:right;padding-right:4.3px;box-sizing:border-box;">700.891</div>
<div class="t" style="left:647px;top:281px;width:53px;color:#555;letter-spacing:0.15px;text-align:right;padding-right:4.3px;box-sizing:border-box;">772.732</div>
<div class="t" style="left:701px;top:281px;width:53px;color:#555;letter-spacing:0.15px;text-align:right;padding-right:4.3px;box-sizing:border-box;">861.044</div>
<div class="t" style="left:286px;top:306px;color:#0505fa;letter-spacing:0.1px;">Forecast: as a Freeform:</div>
<div class="t" style="left:431px;top:306px;width:53px;color:#5cf330;font-style:italic;letter-spacing:0.15px;text-align:right;padding-right:3.3px;box-sizing:border-box;">512.400</div>
<div class="t" style="left:485px;top:306px;width:53px;color:#5cf330;font-style:italic;letter-spacing:0.15px;text-align:right;padding-right:3.3px;box-sizing:border-box;">548.268</div>
<div class="t" style="left:544px;top:306px;color:#111;letter-spacing:0.3px;">None</div>
<div class="t" style="left:598px;top:306px;color:#111;letter-spacing:0.3px;">None</div>
<div class="t" style="left:652px;top:306px;color:#111;letter-spacing:0.3px;">None</div>
<div class="t" style="left:706px;top:306px;color:#111;letter-spacing:0.3px;">None</div>
<div class="t" style="left:114px;top:331px;letter-spacing:0.08px;">v1000:020</div>
<div class="t" style="left:286px;top:331px;letter-spacing:0.1px;">Service Revenues</div>
<div class="t" style="left:431px;top:331px;width:53px;color:#555;letter-spacing:0.15px;text-align:right;padding-right:4.3px;box-sizing:border-box;">14.000</div>
<div class="t" style="left:485px;top:331px;width:53px;color:#555;letter-spacing:0.15px;text-align:right;padding-right:4.3px;box-sizing:border-box;">15.680</div>
<div class="t" style="left:539px;top:331px;width:53px;color:#555;letter-spacing:0.15px;text-align:right;padding-right:4.3px;box-sizing:border-box;">18.032</div>
<div class="t" style="left:593px;top:331px;width:53px;color:#555;letter-spacing:0.15px;text-align:right;padding-right:4.3px;box-sizing:border-box;">20.737</div>
<div class="t" style="left:647px;top:331px;width:53px;color:#555;letter-spacing:0.15px;text-align:right;padding-right:4.3px;box-sizing:border-box;">23.847</div>
<div class="t" style="left:701px;top:331px;width:53px;color:#555;letter-spacing:0.15px;text-align:right;padding-right:4.3px;box-sizing:border-box;">27.424</div>
<div class="t" style="left:286px;top:356px;color:#0505fa;letter-spacing:0.1px;">Forecast: as a Growth</div>
<div class="t" style="left:431px;top:356px;width:53px;color:#5cf330;font-style:italic;letter-spacing:0.15px;text-align:right;padding-right:3.3px;box-sizing:border-box;">14.000</div>
<div class="t" style="left:485px;top:356px;width:53px;color:#5cf330;font-style:italic;letter-spacing:0.15px;text-align:right;padding-right:3.3px;box-sizing:border-box;">15.680</div>
<div class="t" style="left:539px;top:356px;width:53px;color:#111;letter-spacing:0.15px;text-align:right;padding-right:4.3px;box-sizing:border-box;">15.000</div>
<div class="t" style="left:593px;top:356px;width:53px;color:#111;letter-spacing:0.15px;text-align:right;padding-right:4.3px;box-sizing:border-box;">15.000</div>
<div class="t" style="left:647px;top:356px;width:53px;color:#111;letter-spacing:0.15px;text-align:right;padding-right:4.3px;box-sizing:border-box;">15.000</div>
<div class="t" style="left:701px;top:356px;width:53px;color:#111;letter-spacing:0.15px;text-align:right;padding-right:4.3px;box-sizing:border-box;">15.000</div>
<div class="t" style="left:114px;top:381px;letter-spacing:0.08px;">v1000:030</div>
<div class="t" style="left:286px;top:381px;letter-spacing:0.1px;">Maintenance Revenue</div>
<div class="t" style="left:431px;top:381px;width:53px;color:#555;letter-spacing:0.15px;text-align:right;padding-right:4.3px;box-sizing:border-box;">20.000</div>
<div class="t" style="left:485px;top:381px;width:53px;color:#555;letter-spacing:0.15px;text-align:right;padding-right:4.3px;box-sizing:border-box;">23.000</div>
<div class="t" style="left:539px;top:381px;width:53px;color:#555;letter-spacing:0.15px;text-align:right;padding-right:4.3px;box-sizing:border-box;">25.000</div>
<div class="t" style="left:593px;top:381px;width:53px;color:#555;letter-spacing:0.15px;text-align:right;padding-right:4.3px;box-sizing:border-box;">27.000</div>
<div class="t" style="left:647px;top:381px;width:53px;color:#555;letter-spacing:0.15px;text-align:right;padding-right:4.3px;box-sizing:border-box;">29.000</div>
<div class="t" style="left:701px;top:381px;width:53px;color:#555;letter-spacing:0.15px;text-align:right;padding-right:4.3px;box-sizing:border-box;">30.000</div>
<div class="t" style="left:286px;top:406px;color:#0505fa;letter-spacing:0.1px;">Forecast: in Millions of</div>
<div class="t" style="left:431px;top:406px;width:53px;color:#5cf330;font-style:italic;letter-spacing:0.15px;text-align:right;padding-right:3.3px;box-sizing:border-box;">20.000</div>
<div class="t" style="left:485px;top:406px;width:53px;color:#5cf330;font-style:italic;letter-spacing:0.15px;text-align:right;padding-right:3.3px;box-sizing:border-box;">23.000</div>
<div class="t" style="left:539px;top:406px;width:53px;color:#111;letter-spacing:0.15px;text-align:right;padding-right:4.3px;box-sizing:border-box;">25.000</div>
<div class="t" style="left:593px;top:406px;width:53px;color:#111;letter-spacing:0.15px;text-align:right;padding-right:4.3px;box-sizing:border-box;">27.000</div>
<div class="t" style="left:647px;top:406px;width:53px;color:#111;letter-spacing:0.15px;text-align:right;padding-right:4.3px;box-sizing:border-box;">29.000</div>
<div class="t" style="left:701px;top:406px;width:53px;color:#111;letter-spacing:0.15px;text-align:right;padding-right:4.3px;box-sizing:border-box;">30.000</div>
<div class="t" style="left:95.5px;top:431px;letter-spacing:0.08px;">v1020</div>
<div class="t" style="left:286px;top:431px;letter-spacing:0.2px;">Discounts &amp; Returns</div>
<div class="t" style="left:431px;top:431px;width:53px;color:#555;letter-spacing:0.15px;text-align:right;padding-right:4.3px;box-sizing:border-box;">10.100</div>
<div class="t" style="left:485px;top:431px;width:53px;color:#555;letter-spacing:0.15px;text-align:right;padding-right:4.3px;box-sizing:border-box;">43.861</div>
<div class="t" style="left:539px;top:431px;width:53px;color:#555;letter-spacing:0.15px;text-align:right;padding-right:4.3px;box-sizing:border-box;">58.950</div>
<div class="t" style="left:593px;top:431px;width:53px;color:#555;letter-spacing:0.15px;text-align:right;padding-right:4.3px;box-sizing:border-box;">70.089</div>
<div class="t" style="left:647px;top:431px;width:53px;color:#555;letter-spacing:0.15px;text-align:right;padding-right:4.3px;box-sizing:border-box;">77.273</div>
<div class="t" style="left:701px;top:431px;width:53px;color:#555;letter-spacing:0.15px;text-align:right;padding-right:4.3px;box-sizing:border-box;">86.104</div>
<div class="t" style="left:286px;top:456px;color:#0505fa;letter-spacing:0.1px;">Forecast: as a Percent of</div>
<div class="t" style="left:431px;top:456px;width:53px;color:#5cf330;font-style:italic;letter-spacing:0.15px;text-align:right;padding-right:3.3px;box-sizing:border-box;">10.100</div>
<div class="t" style="left:485px;top:456px;width:53px;color:#5cf330;font-style:italic;letter-spacing:0.15px;text-align:right;padding-right:3.3px;box-sizing:border-box;">43.861</div>
<div class="t" style="left:539px;top:456px;width:53px;color:#111;letter-spacing:0.15px;text-align:right;padding-right:4.3px;box-sizing:border-box;">9.000</div>
<div class="t" style="left:593px;top:456px;width:53px;color:#111;letter-spacing:0.15px;text-align:right;padding-right:4.3px;box-sizing:border-box;">10.000</div>
<div class="t" style="left:647px;top:456px;width:53px;color:#111;letter-spacing:0.15px;text-align:right;padding-right:4.3px;box-sizing:border-box;">10.000</div>
<div class="t" style="left:701px;top:456px;width:53px;color:#111;letter-spacing:0.15px;text-align:right;padding-right:4.3px;box-sizing:border-box;">10.000</div>
<div class="t" style="left:95.5px;top:481px;letter-spacing:0.08px;">v1040</div>
<div class="t" style="left:286px;top:481px;letter-spacing:0.17px;">Cost of Goods Sold</div>
<div class="t" style="left:431px;top:481px;width:53px;color:#555;letter-spacing:0.15px;text-align:right;padding-right:4.3px;box-sizing:border-box;">276.700</div>
<div class="t" style="left:485px;top:481px;width:53px;color:#555;letter-spacing:0.15px;text-align:right;padding-right:4.3px;box-sizing:border-box;">334.560</div>
<div class="t" style="left:539px;top:481px;width:53px;color:#555;letter-spacing:0.15px;text-align:right;padding-right:4.3px;box-sizing:border-box;">400.000</div>
<div class="t" style="left:593px;top:481px;width:53px;color:#555;letter-spacing:0.15px;text-align:right;padding-right:4.3px;box-sizing:border-box;">425.000</div>
<div class="t" style="left:647px;top:481px;width:53px;color:#555;letter-spacing:0.15px;text-align:right;padding-right:4.3px;box-sizing:border-box;">480.000</div>
<div class="t" style="left:701px;top:481px;width:53px;color:#555;letter-spacing:0.15px;text-align:right;padding-right:4.3px;box-sizing:border-box;">530.000</div>
<div class="t" style="left:286px;top:506px;color:#0505fa;letter-spacing:0.1px;">Forecast: in Millions of</div>
<div class="t" style="left:431px;top:506px;width:53px;color:#5cf330;font-style:italic;letter-spacing:0.15px;text-align:right;padding-right:3.3px;box-sizing:border-box;">276.700</div>
<div class="t" style="left:485px;top:506px;width:53px;color:#5cf330;font-style:italic;letter-spacing:0.15px;text-align:right;padding-right:3.3px;box-sizing:border-box;">334.560</div>
<div class="t" style="left:539px;top:506px;width:53px;color:#111;letter-spacing:0.15px;text-align:right;padding-right:4.3px;box-sizing:border-box;">400.000</div>
<div class="t" style="left:593px;top:506px;width:53px;color:#111;letter-spacing:0.15px;text-align:right;padding-right:4.3px;box-sizing:border-box;">425.000</div>
<div class="t" style="left:647px;top:506px;width:53px;color:#111;letter-spacing:0.15px;text-align:right;padding-right:4.3px;box-sizing:border-box;">480.000</div>
<div class="t" style="left:701px;top:506px;width:53px;color:#111;letter-spacing:0.15px;text-align:right;padding-right:4.3px;box-sizing:border-box;">530.000</div>
<div class="t" style="left:115px;top:533px;font-weight:bold;letter-spacing:0.15px;">v1080</div>
<svg style="left:101px;top:535px" width="8" height="11" viewBox="0 0 8 11"><path d="M0.8 0L7 5.5L0.8 11Z" fill="#878a8e"/></svg>
<div class="t" style="left:286px;top:531px;font-weight:bold;color:#000;letter-spacing:-0.17px;">Total SG &amp; A Expense</div>
<div class="t" style="left:431px;top:531px;width:53px;color:#555;letter-spacing:0.15px;text-align:right;padding-right:4.3px;box-sizing:border-box;">137.500</div>
<div class="t" style="left:485px;top:531px;width:53px;color:#555;letter-spacing:0.15px;text-align:right;padding-right:4.3px;box-sizing:border-box;">148.066</div>
<div class="t" style="left:539px;top:531px;width:53px;color:#555;letter-spacing:0.15px;text-align:right;padding-right:4.3px;box-sizing:border-box;">162.416</div>
<div class="t" style="left:593px;top:531px;width:53px;color:#555;letter-spacing:0.15px;text-align:right;padding-right:4.3px;box-sizing:border-box;">171.871</div>
<div class="t" style="left:647px;top:531px;width:53px;color:#555;letter-spacing:0.15px;text-align:right;padding-right:4.3px;box-sizing:border-box;">183.824</div>
<div class="t" style="left:701px;top:531px;width:53px;color:#555;letter-spacing:0.15px;text-align:right;padding-right:4.3px;box-sizing:border-box;">197.402</div>
<div class="t" style="left:95.5px;top:556px;letter-spacing:0.08px;">v1090</div>
<div class="t" style="left:286px;top:556px;letter-spacing:0.1px;">Other Operating</div>
<div class="t" style="left:431px;top:556px;width:53px;color:#555;letter-spacing:0.15px;text-align:right;padding-right:4.3px;box-sizing:border-box;">0.000</div>
<div class="t" style="left:485px;top:556px;width:53px;color:#555;letter-spacing:0.15px;text-align:right;padding-right:4.3px;box-sizing:border-box;">0.000</div>
<div class="t" style="left:539px;top:556px;width:53px;color:#555;letter-spacing:0.15px;text-align:right;padding-right:4.3px;box-sizing:border-box;">0.000</div>
<div class="t" style="left:593px;top:556px;width:53px;color:#555;letter-spacing:0.15px;text-align:right;padding-right:4.3px;box-sizing:border-box;">0.000</div>
<div class="t" style="left:647px;top:556px;width:53px;color:#555;letter-spacing:0.15px;text-align:right;padding-right:4.3px;box-sizing:border-box;">0.000</div>
<div class="t" style="left:701px;top:556px;width:53px;color:#555;letter-spacing:0.15px;text-align:right;padding-right:4.3px;box-sizing:border-box;">0.000</div>
<div class="t" style="left:286px;top:581px;color:#0505fa;letter-spacing:0.1px;">Forecast: in Millions of</div>
<div class="t" style="left:431px;top:581px;width:53px;color:#5cf330;font-style:italic;letter-spacing:0.15px;text-align:right;padding-right:3.3px;box-sizing:border-box;">0.000</div>
<div class="t" style="left:485px;top:581px;width:53px;color:#5cf330;font-style:italic;letter-spacing:0.15px;text-align:right;padding-right:3.3px;box-sizing:border-box;">0.000</div>
<div class="t" style="left:539px;top:581px;width:53px;color:#111;letter-spacing:0.15px;text-align:right;padding-right:4.3px;box-sizing:border-box;">0.000</div>
<div class="t" style="left:593px;top:581px;width:53px;color:#111;letter-spacing:0.15px;text-align:right;padding-right:4.3px;box-sizing:border-box;">0.000</div>
<div class="t" style="left:647px;top:581px;width:53px;color:#111;letter-spacing:0.15px;text-align:right;padding-right:4.3px;box-sizing:border-box;">0.000</div>
<div class="t" style="left:701px;top:581px;width:53px;color:#111;letter-spacing:0.15px;text-align:right;padding-right:4.3px;box-sizing:border-box;">0.000</div>
<div class="t" style="left:95.5px;top:606px;letter-spacing:0.08px;">v1110</div>
<div class="t" style="left:286px;top:606px;letter-spacing:0.1px;">Depreciation Expense</div>
<div class="t" style="left:431px;top:606px;width:53px;color:#555;letter-spacing:0.15px;text-align:right;padding-right:4.3px;box-sizing:border-box;">40.000</div>
<div class="t" style="left:485px;top:606px;width:53px;color:#555;letter-spacing:0.15px;text-align:right;padding-right:4.3px;box-sizing:border-box;">43.398</div>
<div class="t" style="left:539px;top:606px;width:53px;color:#555;letter-spacing:0.15px;text-align:right;padding-right:4.3px;box-sizing:border-box;">83.898</div>
<div class="t" style="left:593px;top:606px;width:53px;color:#555;letter-spacing:0.15px;text-align:right;padding-right:4.3px;box-sizing:border-box;">113.598</div>
<div class="t" style="left:647px;top:606px;width:53px;color:#555;letter-spacing:0.15px;text-align:right;padding-right:4.3px;box-sizing:border-box;">134.838</div>
<div class="t" style="left:701px;top:606px;width:53px;color:#555;letter-spacing:0.15px;text-align:right;padding-right:4.3px;box-sizing:border-box;">138.960</div>
<div class="t" style="left:286px;top:631px;color:#0505fa;letter-spacing:0.1px;">Forecast: as a Percent of</div>
<div class="t" style="left:431px;top:631px;width:53px;color:#5cf330;font-style:italic;letter-spacing:0.15px;text-align:right;padding-right:3.3px;box-sizing:border-box;">40.000</div>
<div class="t" style="left:485px;top:631px;width:53px;color:#5cf330;font-style:italic;letter-spacing:0.15px;text-align:right;padding-right:3.3px;box-sizing:border-box;">43.398</div>
<div class="t" style="left:539px;top:631px;width:53px;color:#111;letter-spacing:0.15px;text-align:right;padding-right:4.3px;box-sizing:border-box;">90.000</div>
<div class="t" style="left:593px;top:631px;width:53px;color:#111;letter-spacing:0.15px;text-align:right;padding-right:4.3px;box-sizing:border-box;">90.000</div>
<div class="t" style="left:647px;top:631px;width:53px;color:#111;letter-spacing:0.15px;text-align:right;padding-right:4.3px;box-sizing:border-box;">90.000</div>
<div class="t" style="left:701px;top:631px;width:53px;color:#111;letter-spacing:0.15px;text-align:right;padding-right:4.3px;box-sizing:border-box;">90.000</div>
<div class="t" style="left:95.5px;top:656px;letter-spacing:0.08px;">v1115</div>
<div class="t" style="left:286px;top:656px;letter-spacing:0.1px;">Amortization Expense</div>
<div class="t" style="left:431px;top:656px;width:53px;color:#555;letter-spacing:0.15px;text-align:right;padding-right:4.3px;box-sizing:border-box;">7.600</div>
<div class="t" style="left:485px;top:656px;width:53px;color:#555;letter-spacing:0.15px;text-align:right;padding-right:4.3px;box-sizing:border-box;">7.200</div>
<div class="t" style="left:539px;top:656px;width:53px;color:#555;letter-spacing:0.15px;text-align:right;padding-right:4.3px;box-sizing:border-box;">7.200</div>
<div class="t" style="left:593px;top:656px;width:53px;color:#555;letter-spacing:0.15px;text-align:right;padding-right:4.3px;box-sizing:border-box;">6.900</div>
<div class="t" style="left:647px;top:656px;width:53px;color:#555;letter-spacing:0.15px;text-align:right;padding-right:4.3px;box-sizing:border-box;">6.000</div>
<div class="t" style="left:701px;top:656px;width:53px;color:#555;letter-spacing:0.15px;text-align:right;padding-right:4.3px;box-sizing:border-box;">6.000</div>
<div class="t" style="left:286px;top:681px;color:#0505fa;letter-spacing:0.1px;">Forecast: :as sum of</div>
<div class="t" style="left:436px;top:681px;color:#5cf330;font-style:italic;letter-spacing:0.3px;">None</div>
<div class="t" style="left:490px;top:681px;color:#5cf330;font-style:italic;letter-spacing:0.3px;">None</div>
<div class="t" style="left:544px;top:681px;color:#111;letter-spacing:0.3px;">None</div>
<div class="t" style="left:598px;top:681px;color:#111;letter-spacing:0.3px;">None</div>
<div class="t" style="left:652px;top:681px;color:#111;letter-spacing:0.3px;">None</div>
<div class="t" style="left:706px;top:681px;color:#111;letter-spacing:0.3px;">None</div>
<div style="left:699px;top:705px;width:57px;height:27px;border:2px solid #000;box-sizing:border-box;"></div>
<div style="left:751px;top:727px;width:7px;height:7px;background:#000;border:1px solid #fff;box-sizing:border-box;"></div>
<div style="left:430px;top:744px;width:789px;height:16px;background:#fff;"></div>
<div style="left:431px;top:745px;width:788px;height:15px;background:#f0f0f0;"></div>
<div style="left:448px;top:745px;width:261px;height:15px;background:#cdcdcd;"></div>
<svg style="left:435px;top:748px" width="9" height="9" viewBox="0 0 9 9"><path d="M6.9 1.7L2.7 4.5L6.9 7.3" fill="none" stroke="#4a4a4a" stroke-width="2.2"/></svg>
<svg style="left:1207px;top:748px" width="9" height="9" viewBox="0 0 9 9"><path d="M1.9 1.7L6.1 4.5L1.9 7.3" fill="none" stroke="#4a4a4a" stroke-width="2.2"/></svg>

<!-- mouse cursor -->
<svg style="left:1026px;top:165px;z-index:3" width="15" height="22" viewBox="0 0 15 22">
  <path d="M1.2 1.4V17.6L5 14L7.7 20.3L10.3 19.2L7.6 13H12.8Z" fill="#fff" stroke="#111" stroke-width="0.95" stroke-linejoin="miter"/>
</svg>
</div>
</body>
</html>
